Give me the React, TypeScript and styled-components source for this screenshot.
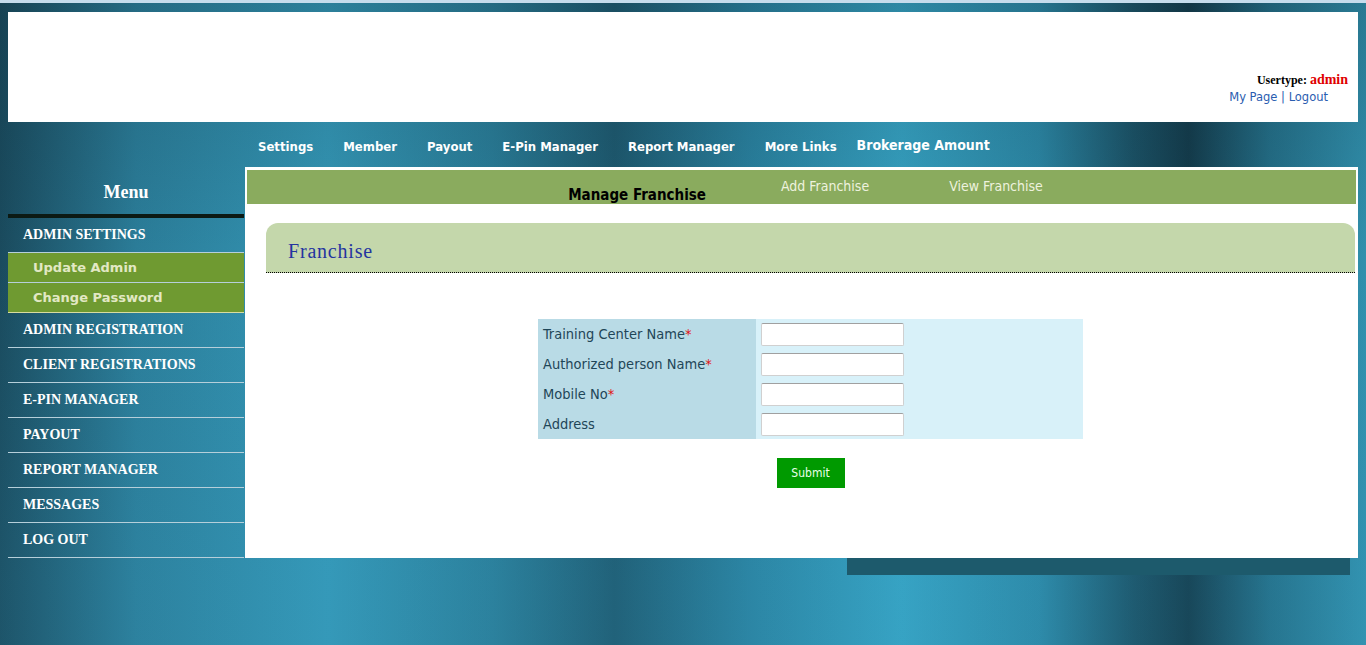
import React from 'react'
import styled, { createGlobalStyle } from 'styled-components'

const GlobalStyle = createGlobalStyle`
  html, body {
    margin: 0;
    padding: 0;
  }
  body {
    min-height: 645px;
    font-family: "DejaVu Sans", Verdana, sans-serif;
    background:
      linear-gradient(180deg, rgba(10, 30, 40, 0.2) 0%, rgba(10, 30, 40, 0) 40%, rgba(60, 170, 210, 0.1) 90%),
      linear-gradient(90deg,
        #1a4b5e 0%,
        #2b7d99 10%,
        #3497b6 24%,
        #2a7d98 36%,
        #1e5a70 45%,
        #2a82a0 55%,
        #36a2c2 66%,
        #2c88a6 76%,
        #1b5266 83%,
        #143c4c 87%,
        #246f88 93%,
        #3190ad 100%);
  }
`

const TopStrip = styled.div`
  height: 3px;
  background: #c6dcec;
`

const Wrapper = styled.div`
  margin: 9px 8px 0;
`

const Header = styled.header`
  height: 110px;
  background: #fff;
  display: flex;
  justify-content: flex-end;
  align-items: flex-end;
`

const UserBlock = styled.div`
  display: flex;
  flex-direction: column;
  align-items: flex-end;
  padding: 0 10px 16px 0;
`

const UserLine = styled.div`
  font-family: "Liberation Serif", serif;
  font-weight: bold;
  font-size: 12px;
  line-height: 16px;
  color: #000;
`

const Admin = styled.span`
  color: #e00000;
  font-size: 14px;
`

const Links = styled.div`
  padding-right: 20px;
  font-size: 11.5px;
  line-height: 18px;
  color: #2a5db0;
  a {
    color: #2a5db0;
    text-decoration: none;
  }
`

const NavBar = styled.nav`
  height: 45px;
  display: flex;
  align-items: center;
  padding: 4px 0 0 235px;
  box-sizing: border-box;
`

const NavItem = styled.a<{ $big?: boolean }>`
  padding: 0 ${p => (p.$big ? '5px' : '15px')};
  color: #fff;
  font-family: "DejaVu Sans Condensed", "DejaVu Sans", sans-serif;
  font-weight: bold;
  font-size: ${p => (p.$big ? '14px' : '13px')};
  margin-top: ${p => (p.$big ? '-3px' : '0')};
  text-decoration: none;
  white-space: nowrap;
`

const Main = styled.div`
  display: flex;
  align-items: stretch;
`

const Sidebar = styled.aside`
  width: 236px;
  flex-shrink: 0;
`

const MenuHead = styled.div`
  height: 51px;
  display: flex;
  align-items: center;
  justify-content: center;
  padding-top: 4px;
  box-sizing: border-box;
  font-family: "Liberation Serif", serif;
  font-weight: bold;
  font-size: 18px;
  color: #fff;
  border-bottom: 4px solid #0c1a14;
`

const MenuItem = styled.div`
  height: 35px;
  box-sizing: border-box;
  display: flex;
  align-items: center;
  padding-left: 15px;
  border-bottom: 1px solid #b6cfda;
  font-family: "Liberation Serif", serif;
  font-weight: bold;
  font-size: 14px;
  color: #fff;
`

const SubItem = styled.div<{ $last?: boolean }>`
  height: 30px;
  box-sizing: border-box;
  display: flex;
  align-items: center;
  padding-left: 25px;
  background: #6f9a31;
  border-bottom: 1px solid ${p => (p.$last ? '#d8dca0' : '#b6cfda')};
  font-weight: bold;
  font-size: 13px;
  color: #e2e8c4;
`

const Content = styled.section`
  flex: 1;
  background: #fff;
  padding: 3px 2px 0;
  margin-left: 1px;
`

const SubBar = styled.div`
  height: 34px;
  background: #8aab5e;
  display: flex;
  justify-content: center;
  padding-left: 8px;
  font-family: "DejaVu Sans Condensed", "DejaVu Sans", sans-serif;
`

const ManageTab = styled.div`
  align-self: flex-end;
  padding-bottom: 1px;
  font-weight: bold;
  font-size: 15px;
  line-height: 16px;
  color: #000;
`

const SubLink = styled.a<{ $gap: number }>`
  align-self: flex-start;
  margin-left: ${p => p.$gap}px;
  padding-top: 9px;
  font-size: 14px;
  line-height: 15px;
  color: #eef2de;
  text-decoration: none;
`

const Inner = styled.div`
  margin: 19px 1px 0 19px;
`

const TitleBox = styled.div`
  height: 50px;
  box-sizing: border-box;
  background: #c4d7ab;
  border-radius: 12px 12px 0 0;
  border-bottom: 1px dotted #000;
  display: flex;
  align-items: center;
  padding: 8px 0 0 22px;
`

const Title = styled.h2`
  margin: 0;
  font-family: "Liberation Serif", serif;
  font-weight: normal;
  font-size: 20px;
  letter-spacing: 0.8px;
  color: #2434a0;
`

const FormGrid = styled.div`
  width: 545px;
  margin: 46px auto 0;
  display: grid;
  grid-template-columns: 218px 327px;
  font-family: "DejaVu Sans Condensed", "DejaVu Sans", sans-serif;
`

const LabelCell = styled.div`
  height: 30px;
  display: flex;
  align-items: center;
  padding-left: 5px;
  background: #b9dbe6;
  font-size: 14.5px;
  color: #1f4658;
`

const Req = styled.span`
  color: #e01010;
`

const InputCell = styled.div`
  height: 30px;
  display: flex;
  align-items: center;
  padding-left: 5px;
  background: #d8f1f9;
`

const TextInput = styled.input`
  width: 143px;
  height: 23px;
  box-sizing: border-box;
  border: 1px solid #d0d0d0;
  border-top-color: #a0a0a0;
  border-radius: 2px;
  background: #fff;
  outline: none;
`

const SubmitButton = styled.button`
  display: block;
  margin: 19px auto 0;
  width: 68px;
  height: 30px;
  border: none;
  background: #009a00;
  color: #eaffea;
  font-family: "DejaVu Sans Condensed", "DejaVu Sans", sans-serif;
  font-size: 12px;
`

const FooterBar = styled.div`
  margin: 0 0 0 839px;
  width: 503px;
  height: 17px;
  background: #1d5a6c;
`

const navLinks = ['Settings', 'Member', 'Payout', 'E-Pin Manager', 'Report Manager', 'More Links']

const menu = [
  'ADMIN REGISTRATION',
  'CLIENT REGISTRATIONS',
  'E-PIN MANAGER',
  'PAYOUT',
  'REPORT MANAGER',
  'MESSAGES',
  'LOG OUT',
]

const fields = [
  { label: 'Training Center Name', required: true },
  { label: 'Authorized person Name', required: true },
  { label: 'Mobile No', required: true },
  { label: 'Address', required: false },
]

export default function App() {
  return (
    <>
      <GlobalStyle />
      <TopStrip />
      <Wrapper>
        <Header>
          <UserBlock>
            <UserLine>
              Usertype: <Admin>admin</Admin>
            </UserLine>
            <Links>
              <a href="#">My Page</a> | <a href="#">Logout</a>
            </Links>
          </UserBlock>
        </Header>

        <NavBar>
          {navLinks.map(l => (
            <NavItem key={l} href="#">{l}</NavItem>
          ))}
          <NavItem $big href="#">Brokerage Amount</NavItem>
        </NavBar>

        <Main>
          <Sidebar>
            <MenuHead>Menu</MenuHead>
            <MenuItem>ADMIN SETTINGS</MenuItem>
            <SubItem>Update Admin</SubItem>
            <SubItem $last>Change Password</SubItem>
            {menu.map(m => (
              <MenuItem key={m}>{m}</MenuItem>
            ))}
          </Sidebar>

          <Content>
            <SubBar>
              <ManageTab>Manage Franchise</ManageTab>
              <SubLink $gap={75} href="#">Add Franchise</SubLink>
              <SubLink $gap={80} href="#">View Franchise</SubLink>
            </SubBar>
            <Inner>
              <TitleBox>
                <Title>Franchise</Title>
              </TitleBox>
              <FormGrid>
                {fields.map(f => (
                  <React.Fragment key={f.label}>
                    <LabelCell>
                      {f.label}
                      {f.required && <Req>*</Req>}
                    </LabelCell>
                    <InputCell>
                      <TextInput type="text" />
                    </InputCell>
                  </React.Fragment>
                ))}
              </FormGrid>
              <SubmitButton type="button">Submit</SubmitButton>
            </Inner>
          </Content>
        </Main>

        <FooterBar />
      </Wrapper>
    </>
  )
}
